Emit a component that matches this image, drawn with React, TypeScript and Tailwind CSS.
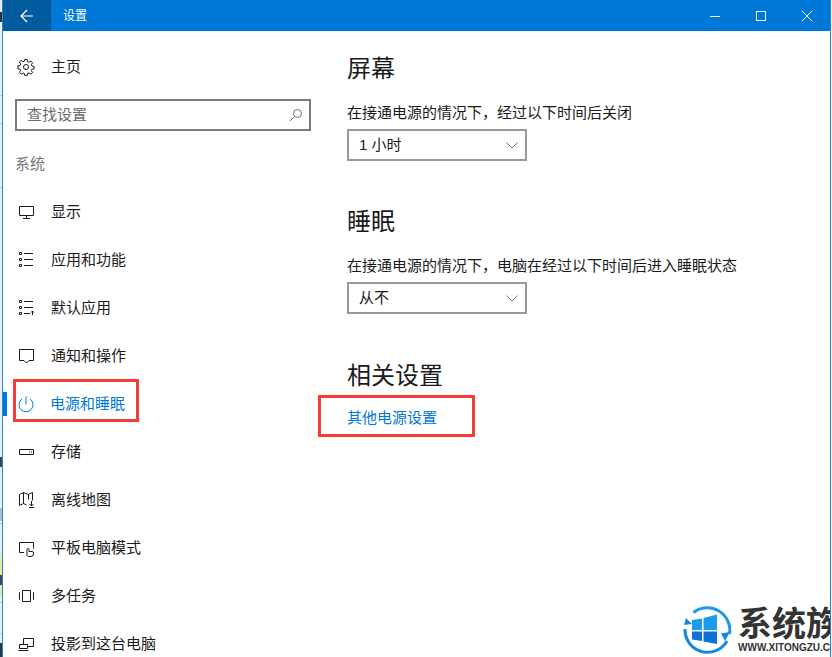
import React from 'react';

const FONT = 'font-["Liberation_Sans","Noto_Sans_CJK_SC",sans-serif]';

function Icon({ children }: { children: React.ReactNode }) {
  return (
    <svg width="18" height="18" viewBox="0 0 18 18" fill="none" stroke="currentColor" strokeWidth="1" className="shrink-0">
      {children}
    </svg>
  );
}

const NAV_ITEMS: { label: string; icon: React.ReactNode; active?: boolean }[] = [
  {
    label: '显示',
    icon: (
      <Icon>
        <path d="M2.500 3.500h14v9h-14zM9.500 12.500v3M6 15.500h7" />
      </Icon>
    ),
  },
  {
    label: '应用和功能',
    icon: (
      <Icon>
        <path d="M2.500 1.500h2v2h-2zM2.500 7.500h2v2h-2zM2.500 13.500h2v2h-2zM7 2.500h9M7 8.500h9M7 14.500h9" />
      </Icon>
    ),
  },
  {
    label: '默认应用',
    icon: (
      <Icon>
        <path d="M2.500 1.500h2v2h-2zM2.500 7.500h2v2h-2zM2.500 13.500h2v2h-2zM7 2.500h9M7 8.500h9M7 14.500h6M15.500 16v-4M14 13.500l1.500-1.500 1.500 1.500" />
      </Icon>
    ),
  },
  {
    label: '通知和操作',
    icon: (
      <Icon>
        <path d="M2.500 2.500h14v11h-4.500l-2.500 2.500-2.500-2.500h-4.500z" />
      </Icon>
    ),
  },
  {
    label: '电源和睡眠',
    active: true,
    icon: (
      <Icon>
        <path d="M9 1.500v8M5 4a7 7 0 1 0 8 0" />
      </Icon>
    ),
  },
  {
    label: '存储',
    icon: (
      <Icon>
        <path d="M2.500 6.500h14v5h-14zM12 9h1M14 9h1" />
      </Icon>
    ),
  },
  {
    label: '离线地图',
    icon: (
      <Icon>
        <path d="M2.500 3.500l4-2 5 2 4-2v8M2.500 3.500v11l4-2 3 1.500M6.500 1.500v11M11.500 3.500v5M14.500 10v5M12.500 13l2 2 2-2M12 16.500h5" />
      </Icon>
    ),
  },
  {
    label: '平板电脑模式',
    icon: (
      <Icon>
        <path d="M7 13.500h-4.500v-10h14v6M10 16.500v-6a1 1 0 0 1 2 0v2h3a1.500 1.500 0 0 1 1.500 1.500v1a2.500 2.500 0 0 1-2.500 2.500h-2.500z" />
      </Icon>
    ),
  },
  {
    label: '多任务',
    icon: (
      <Icon>
        <path d="M5.500 3.500h8v11h-8zM3 5.500h-.5v7h.5M16 5.500h.5v7h-.5" />
      </Icon>
    ),
  },
  {
    label: '投影到这台电脑',
    icon: (
      <Icon>
        <path d="M6.500 9v-5.500h10v8h-6M2.500 9.500h8v4h-8zM1.500 15.500h10" />
      </Icon>
    ),
  },
];

// sliver of whatever window sits behind the settings window
const BEHIND: [number, string][] = [
  [12, '#eeeeee'], [10, '#333333'], [73, '#eeeeee'], [1, '#c8c8c8'], [27, '#eeeeee'], [1, '#c8c8c8'],
  [63, '#eeeeee'], [1, '#c8c8c8'], [269, '#eeeeee'], [10, '#444444'], [41, '#eeeeee'], [13, '#bbbbbb'],
  [2, '#eeeeee'], [1, '#c8c8c8'], [29, '#eeeeee'], [22, '#e8e8b0'], [10, '#444444'], [12, '#e8e8b0'],
  [5, '#eeeeee'], [1, '#c8c8c8'], [30, '#eeeeee'], [1, '#c8c8c8'], [9, '#eeeeee'], [14, '#333333'],
];

function NavRow({ label, icon, active }: { label: string; icon: React.ReactNode; active?: boolean }) {
  return (
    <div className={`relative flex h-12 items-center pl-[14px] ${active ? 'text-[#0078d7]' : 'text-[#1a1a1a]'}`}>
      {active && <div className="absolute left-0 top-[12px] h-6 w-1 bg-[#0078d7]" />}
      {icon}
      <span className={`text-[15px] ${active ? 'ml-[15px]' : 'ml-4'}`}>{label}</span>
    </div>
  );
}

function Dropdown({ value }: { value: string }) {
  return (
    <div className="mt-[6px] flex h-8 w-[180px] items-center justify-between border-2 border-[#999999] pl-[10px] pr-[7px] text-[15px] text-[#1a1a1a]">
      <span>{value}</span>
      <svg width="12" height="7" viewBox="0 0 12 7" fill="none" stroke="#777777" strokeWidth="1">
        <path d="M.5 .5L6 6l5.500-5.500" />
      </svg>
    </div>
  );
}

function Logo() {
  return (
    <div className="absolute bottom-0 right-[2px] flex h-[58px] w-[149px] items-center overflow-hidden">
      <svg width="50" height="54" viewBox="0 0 50 54" className="ml-[2px] shrink-0">
        <path d="M10.500 11.500A22.500 22.500 0 0 1 46.500 33" fill="none" stroke="#1a9be8" strokeWidth="3" />
        <path d="M44 40A22.500 22.500 0 0 1 2 28" fill="none" stroke="#1488e0" strokeWidth="3" />
        <path d="M38 32.500L47 31l-5 9zM1 24l8-1-6-6z" fill="#1488e0" />
        <path d="M9 19l10-1.500V29H9zM20.500 17L34 13.500V29H20.500z" fill="#1e9be8" />
        <path d="M9 30.500h10V40l-10-1.500zM20.500 30.500H34V43l-13.500-2.500z" fill="#0a72d8" />
      </svg>
      <div className="ml-[5px] flex min-w-0 flex-col pt-[3px] leading-none text-[#333333]">
        <span className="whitespace-nowrap text-[34px] font-bold">系统族</span>
        <span className="mt-[2px] whitespace-nowrap text-[10px] font-bold">WWW.XITONGZU.COM</span>
      </div>
    </div>
  );
}

export default function App() {
  return (
    <div className={`relative flex h-[657px] w-[832px] overflow-hidden bg-white pr-px ${FONT}`}>
      <div className="flex w-[2px] shrink-0 flex-col">
        {BEHIND.map(([h, color], i) => (
          <div key={i} style={{ height: h, backgroundColor: color }} />
        ))}
      </div>
      <div className="flex h-full min-w-0 flex-1 flex-col border-x border-[#1a86dc] bg-white">
        {/* Title bar */}
        <header className="flex h-[31px] shrink-0 items-center bg-[#0078d7] text-white">
          <div className="flex h-full w-12 items-center justify-center bg-[#005a9e]">
            <svg width="14" height="14" viewBox="0 0 14 14" fill="none" stroke="currentColor" strokeWidth="1.200">
              <path d="M13 7H1M7 1L1 7l6 6" />
            </svg>
          </div>
          <span className="ml-3 text-xs">设置</span>
          <div className="ml-auto flex items-center">
            <svg width="12" height="12" viewBox="0 0 12 12" stroke="currentColor" fill="none" className="mr-[34px]">
              <path d="M1 6.500h10" />
            </svg>
            <svg width="12" height="12" viewBox="0 0 12 12" stroke="currentColor" fill="none" className="mr-[34px]">
              <path d="M1.500 1.500h9v9h-9z" />
            </svg>
            <svg width="12" height="12" viewBox="0 0 12 12" stroke="currentColor" fill="none" className="mr-[17px]">
              <path d="M1 1l10 10M11 1L1 11" />
            </svg>
          </div>
        </header>

        <div className="flex min-h-0 flex-1">
          {/* Sidebar */}
          <aside className="w-[344px] shrink-0">
            <div className="flex h-[68px] items-center pl-[14px] pt-1 text-[#1a1a1a]">
              <Icon>
                <circle cx="9" cy="9" r="2.500" />
                <path d="M7.800 1.500h2.400l.4 2.200 1.400.6 1.900-1.300 1.700 1.700-1.300 1.900.6 1.400 2.200.4v2.400l-2.200.4-.6 1.400 1.300 1.900-1.700 1.700-1.900-1.300-1.400.6-.4 2.200H7.800l-.4-2.200-1.400-.6-1.900 1.300-1.700-1.700 1.300-1.900-.6-1.400-2.200-.4V7.800l2.200-.4.6-1.400-1.300-1.900 1.700-1.700 1.900 1.300 1.400-.6z" />
              </Icon>
              <span className="ml-4 text-[15px]">主页</span>
            </div>
            <div className="ml-3 flex h-8 w-[296px] items-center justify-between border-2 border-[#7a7a7a] pl-[10px] pr-[6px] text-[15px] text-[#6d6d6d]">
              <span>查找设置</span>
              <svg width="14" height="14" viewBox="0 0 14 14" fill="none" stroke="currentColor" strokeWidth="1">
                <circle cx="8.500" cy="5.500" r="4" />
                <path d="M5.500 8.500L1 13" />
              </svg>
            </div>
            <div className="ml-3 mt-6 text-[15px] leading-[18px] text-[#767676]">系统</div>
            <nav className="mt-[15px]">
              {NAV_ITEMS.map((item) => (
                <NavRow key={item.label} {...item} />
              ))}
            </nav>
          </aside>

          {/* Content */}
          <main className="flex-1 pt-[22px] text-[#1a1a1a]">
            <h2 className="text-2xl leading-8">屏幕</h2>
            <p className="mt-[18px] text-[15px] leading-5">在接通电源的情况下，经过以下时间后关闭</p>
            <Dropdown value="1 小时" />
            <h2 className="mt-[45px] text-2xl leading-8">睡眠</h2>
            <p className="mb-px mt-[18px] text-[15px] leading-5">在接通电源的情况下，电脑在经过以下时间后进入睡眠状态</p>
            <Dropdown value="从不" />
            <h2 className="mt-[46px] text-2xl leading-8">相关设置</h2>
            <p className="mt-4 text-[15px] leading-5 text-[#0078d7]">其他电源设置</p>
          </main>
        </div>
      </div>

      {/* Red annotation boxes */}
      <div className="absolute left-[13px] top-[379px] h-[43px] w-[126px] border-[3px] border-[#f63b3b]" />
      <div className="absolute left-[318px] top-[395px] h-[42px] w-[157px] border-[3px] border-[#f63b3b]" />

      <Logo />
    </div>
  );
}
